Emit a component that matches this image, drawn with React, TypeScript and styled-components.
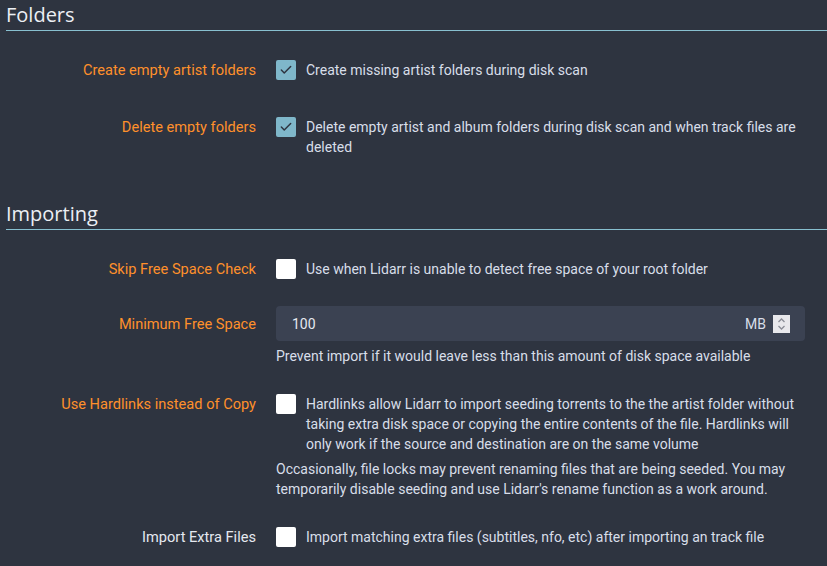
import React from 'react';
import styled, { createGlobalStyle } from 'styled-components';
import { Check } from 'lucide-react';

const GlobalStyle = createGlobalStyle`
  html, body {
    margin: 0;
    padding: 0;
    background: #2e3440;
  }

  body {
    font-family: Roboto, "Liberation Sans", sans-serif;
    font-size: 14px;
    color: #d8dee9;
    overflow: hidden;
  }
`;

const Page = styled.div`
  padding: 0 0 0 6px;
  width: 821px;
  height: 566px;
  overflow: hidden;
`;

const Fieldset = styled.section`
  margin-bottom: 42px;
`;

const Legend = styled.h2`
  margin: 0 0 21px;
  height: 30px;
  border-bottom: 1px solid #88c0d0;
  font-family: "Open Sans", "Noto Sans", sans-serif;
  font-size: 20px;
  font-weight: 400;
  line-height: 29px;
  color: #eceff4;
`;

const Group = styled.div<{ $spacing?: number }>`
  display: grid;
  grid-template-columns: 250px 1fr;
  column-gap: 20px;
  margin-bottom: ${({ $spacing }) => $spacing ?? 20}px;
  padding-right: 22px;
`;

const Label = styled.label<{ $advanced?: boolean }>`
  text-align: right;
  font-size: 14.6px;
  font-weight: 400;
  line-height: 36px;
  height: 35px;
  color: ${({ $advanced }) => ($advanced ? '#ff902b' : '#e5e9f0')};
`;

const InputColumn = styled.div`
  display: flex;
  flex-direction: column;
`;

const CheckRow = styled.div`
  display: flex;
  align-items: flex-start;
  gap: 10px;
  padding-top: 8px;
`;

const Box = styled.span<{ $checked?: boolean }>`
  flex: none;
  display: flex;
  align-items: center;
  justify-content: center;
  width: 20px;
  height: 20px;
  border-radius: 2px;
  background: ${({ $checked }) => ($checked ? '#7fb7ca' : '#ffffff')};
  color: #2e3440;
`;

const CheckText = styled.span`
  line-height: 20px;
`;

const HelpText = styled.div`
  margin-top: 5px;
  line-height: 20px;
  color: #d8dee9;
`;

const NumberInput = styled.div`
  display: flex;
  align-items: center;
  height: 35px;
  padding: 0 15px 0 16px;
  border-radius: 4px;
  background: #3b4252;
`;

const Value = styled.span`
  flex: 1;
  color: #e5e9f0;
`;

const Unit = styled.span`
  color: #d8dee9;
  margin-right: 7px;
`;

const Spinner = styled.span`
  display: flex;
  width: 17px;
  height: 18px;
  background: #e8e8ec;
  align-items: center;
  justify-content: center;
`;

function Checkbox({ checked }: { checked?: boolean }) {
  return (
    <Box $checked={checked}>
      {checked && <Check size={14} strokeWidth={2.5} />}
    </Box>
  );
}

function CheckGroup({
  label,
  advanced,
  checked,
  text,
  help,
  spacing,
}: {
  label: string;
  advanced?: boolean;
  checked?: boolean;
  text: string;
  help?: string;
  spacing?: number;
}) {
  return (
    <Group $spacing={spacing}>
      <Label $advanced={advanced}>{label}</Label>
      <InputColumn>
        <CheckRow>
          <Checkbox checked={checked} />
          <CheckText>{text}</CheckText>
        </CheckRow>
        {help && <HelpText>{help}</HelpText>}
      </InputColumn>
    </Group>
  );
}

export default function App() {
  return (
    <>
      <GlobalStyle />
      <Page>
        <Fieldset>
          <Legend>Folders</Legend>
          <CheckGroup
            advanced
            checked
            label="Create empty artist folders"
            text="Create missing artist folders during disk scan"
            spacing={22}
          />
          <CheckGroup
            advanced
            checked
            label="Delete empty folders"
            text="Delete empty artist and album folders during disk scan and when track files are deleted"
          />
        </Fieldset>

        <Fieldset>
          <Legend>Importing</Legend>
          <CheckGroup
            advanced
            label="Skip Free Space Check"
            text="Use when Lidarr is unable to detect free space of your root folder"
          />
          <Group>
            <Label $advanced>Minimum Free Space</Label>
            <InputColumn>
              <NumberInput>
                <Value>100</Value>
                <Unit>MB</Unit>
                <Spinner>
                  <svg width="9" height="14" viewBox="0 0 9 14" fill="none" stroke="#8a8d96" strokeWidth="1.3">
                    <path d="M1.5 5 L4.5 2 L7.5 5" />
                    <path d="M1.5 9 L4.5 12 L7.5 9" />
                  </svg>
                </Spinner>
              </NumberInput>
              <HelpText>Prevent import if it would leave less than this amount of disk space available</HelpText>
            </InputColumn>
          </Group>
          <CheckGroup
            advanced
            label="Use Hardlinks instead of Copy"
            text="Hardlinks allow Lidarr to import seeding torrents to the the artist folder without taking extra disk space or copying the entire contents of the file. Hardlinks will only work if the source and destination are on the same volume"
            help="Occasionally, file locks may prevent renaming files that are being seeded. You may temporarily disable seeding and use Lidarr's rename function as a work around."
          />
          <CheckGroup
            label="Import Extra Files"
            text="Import matching extra files (subtitles, nfo, etc) after importing an track file"
          />
        </Fieldset>
      </Page>
    </>
  );
}
